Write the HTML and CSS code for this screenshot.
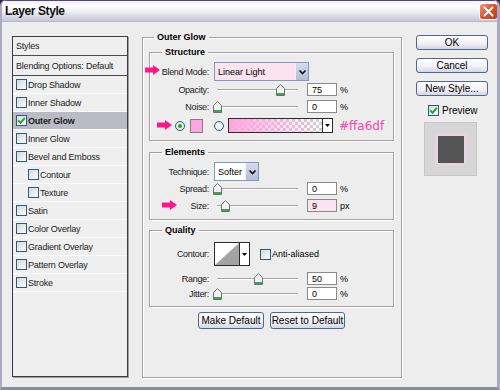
FILE: index.html
```html
<!DOCTYPE html>
<html lang="en">
<head>
<meta charset="UTF-8">
<meta name="viewport" content="width=device-width, initial-scale=1.0">
<title>Layer Style</title>
<link rel="stylesheet" href="styles.css">
</head>
<body>

<div class="window">
  <div class="titlebar">
    <span class="title">Layer Style</span>
    <span class="close">
      <svg width="11" height="11" viewBox="0 0 11 11"><path d="M1.5 1.5 L9.5 9.5 M9.5 1.5 L1.5 9.5" stroke="#fff" stroke-width="2" stroke-linecap="round"/></svg>
    </span>
  </div>

  <div class="content">
    <ul class="styles-list">
      <li class="head">Styles</li>
      <li class="head">Blending Options: Default</li>
      <li><span class="check"></span>Drop Shadow</li>
      <li><span class="check"></span>Inner Shadow</li>
      <li class="selected"><span class="check"><svg width="9" height="9" viewBox="0 0 9 9"><path d="M1.2 4.4 L3.5 6.8 L7.8 1.8" stroke="#1fa31f" stroke-width="1.9" fill="none"/></svg></span>Outer Glow</li>
      <li><span class="check"></span>Inner Glow</li>
      <li><span class="check"></span>Bevel and Emboss</li>
      <li class="sub"><span class="check"></span>Contour</li>
      <li class="sub"><span class="check"></span>Texture</li>
      <li><span class="check"></span>Satin</li>
      <li><span class="check"></span>Color Overlay</li>
      <li><span class="check"></span>Gradient Overlay</li>
      <li><span class="check"></span>Pattern Overlay</li>
      <li><span class="check"></span>Stroke</li>
    </ul>

    <fieldset class="group outer">
      <legend>Outer Glow</legend>

      <fieldset class="group structure">
        <legend>Structure</legend>
        <div class="row row-select">
          <span class="arrow arrow-blend"><svg width="15" height="10" viewBox="0 0 15 10"><polygon points="0,2.5 8,2.5 8,0 15,5 8,10 8,7.5 0,7.5" fill="#ff1689"/></svg></span>
          <label class="lbl">Blend Mode:</label>
          <div class="select blend">
            <span class="select-text">Linear Light</span>
            <span class="select-btn"><svg width="9" height="8" viewBox="0 0 9 8"><path d="M1.5 2.5 L4.5 5.5 L7.5 2.5" stroke="#111" stroke-width="1.6" fill="none"/></svg></span>
          </div>
        </div>
        <div class="row row-opacity">
          <label class="lbl">Opacity:</label>
          <div class="slider"><span class="thumb" style="left: 78%"></span></div>
          <span class="field">75</span><span class="unit">%</span>
        </div>
        <div class="row row-noise">
          <label class="lbl">Noise:</label>
          <div class="slider"><span class="thumb" style="left: 0%"></span></div>
          <span class="field">0</span><span class="unit">%</span>
        </div>
        <div class="row row-color">
          <span class="arrow arrow-color"><svg width="15" height="10" viewBox="0 0 15 10"><polygon points="0,2.5 8,2.5 8,0 15,5 8,10 8,7.5 0,7.5" fill="#ff1689"/></svg></span>
          <span class="radio on"></span>
          <span class="swatch"></span>
          <span class="radio"></span>
          <div class="grad">
            <span class="grad-fill"></span>
            <span class="grad-btn"><svg width="7" height="5" viewBox="0 0 7 5"><polygon points="1,1 6,1 3.5,4" fill="#000"/></svg></span>
          </div>
          <span class="hex">#ffa6df</span>
        </div>
      </fieldset>

      <fieldset class="group elements">
        <legend>Elements</legend>
        <div class="row row-select">
          <label class="lbl">Technique:</label>
          <div class="select technique">
            <span class="select-text">Softer</span>
            <span class="select-btn"><svg width="9" height="8" viewBox="0 0 9 8"><path d="M1.5 2.5 L4.5 5.5 L7.5 2.5" stroke="#111" stroke-width="1.6" fill="none"/></svg></span>
          </div>
        </div>
        <div class="row row-spread">
          <label class="lbl">Spread:</label>
          <div class="slider"><span class="thumb" style="left: 0%"></span></div>
          <span class="field">0</span><span class="unit">%</span>
        </div>
        <div class="row row-size">
          <span class="arrow arrow-size"><svg width="15" height="10" viewBox="0 0 15 10"><polygon points="0,2.5 8,2.5 8,0 15,5 8,10 8,7.5 0,7.5" fill="#ff1689"/></svg></span>
          <label class="lbl">Size:</label>
          <div class="slider"><span class="thumb" style="left: 10%"></span></div>
          <span class="field pink">9</span><span class="unit">px</span>
        </div>
      </fieldset>

      <fieldset class="group quality">
        <legend>Quality</legend>
        <div class="row row-contour">
          <label class="lbl">Contour:</label>
          <div class="contour">
            <span class="contour-img"><svg width="24" height="22" viewBox="0 0 24 22"><polygon points="0,22 24,0 24,22" fill="#a3a3a3"/></svg></span>
            <span class="grad-btn"><svg width="7" height="5" viewBox="0 0 7 5"><polygon points="1,1 6,1 3.5,4" fill="#000"/></svg></span>
          </div>
          <span class="check aa"></span><span class="aa-label">Anti-aliased</span>
        </div>
        <div class="row row-range">
          <label class="lbl">Range:</label>
          <div class="slider"><span class="thumb" style="left: 50%"></span></div>
          <span class="field">50</span><span class="unit">%</span>
        </div>
        <div class="row row-jitter">
          <label class="lbl">Jitter:</label>
          <div class="slider"><span class="thumb" style="left: 0%"></span></div>
          <span class="field">0</span><span class="unit">%</span>
        </div>
      </fieldset>

      <div class="defaults">
        <button class="btn make">Make Default</button>
        <button class="btn reset">Reset to Default</button>
      </div>
    </fieldset>

    <div class="side">
      <button class="btn side-btn">OK</button>
      <button class="btn side-btn">Cancel</button>
      <button class="btn side-btn">New Style...</button>
      <div class="preview-row">
        <span class="check"><svg width="9" height="9" viewBox="0 0 9 9"><path d="M1.2 4.4 L3.5 6.8 L7.8 1.8" stroke="#1fa31f" stroke-width="1.9" fill="none"/></svg></span>
        <span>Preview</span>
      </div>
      <div class="preview">
        <span class="preview-square"></span>
      </div>
    </div>
  </div>
</div>

</body>
</html>
```

FILE: styles.css
```css
body {
  margin: 0;
  background-color: #2f2147;
  font-family: "Liberation Sans", Arial, sans-serif;
  font-size: 9px;
  color: #000;
}

.window {
  width: 500px;
  height: 390px;
  box-sizing: border-box;
  background-color: #ededed;
  border-left: 2px solid #a9a9c2;
  border-right: 3px solid #a9a9c2;
  border-bottom: 3px solid #8a8aa2;
  border-radius: 6px 6px 0 0;
  overflow: hidden;
}

/* title bar */
.titlebar {
  height: 22px;
  box-sizing: border-box;
  display: flex;
  align-items: center;
  justify-content: space-between;
  padding-left: 3px;
  border-top: 1px solid #54467a;
  border-bottom: 1px solid #b8b8cc;
  background: linear-gradient(#eeeef4, #ffffff 25%, #ececf2 55%, #c6c6d8);
}

.title {
  font-size: 12px;
  font-weight: bold;
  letter-spacing: -0.4px;
  color: #111;
}

.close {
  width: 19px;
  height: 17px;
  box-sizing: border-box;
  margin-right: -1px;
  display: flex;
  align-items: center;
  justify-content: center;
  border: 1px solid #fff;
  border-radius: 3px;
  background: linear-gradient(135deg, #f09a80, #d9542e 50%, #c23c16);
}

.content {
  display: flex;
  align-items: flex-start;
  padding: 9px 0 0 10px;
}

/* left styles list */
.styles-list {
  width: 116px;
  height: 341px;
  box-sizing: border-box;
  margin: 5px 0 0;
  padding: 0;
  list-style: none;
  border: 1px solid #3d3d3d;
  box-shadow: 1px 1px 0 #a0a0a0;
  background-color: #efefef;
  letter-spacing: -0.2px;
  color: #1a1a1a;
}

.styles-list li {
  height: 18px;
  box-sizing: border-box;
  display: flex;
  align-items: center;
  padding-left: 3px;
  border-bottom: 1px solid #fbfbfb;
}

.styles-list li.head {
  height: 19px;
  border-bottom: 1px solid #4a4a4a;
}

.styles-list li.head + li.head {
  height: 20px;
}

.styles-list li.sub {
  padding-left: 15px;
}

.styles-list li.selected {
  background-color: #bbbbc5;
  font-weight: bold;
}

.check {
  width: 11px;
  height: 11px;
  box-sizing: border-box;
  flex: none;
  display: inline-flex;
  align-items: center;
  justify-content: center;
  margin-right: 1px;
  border: 1px solid #2a5a8a;
  background: linear-gradient(135deg, #d8d8d2, #fbfbfb);
}

/* group boxes */
.group {
  margin: 0;
  box-sizing: border-box;
  border: 1px solid #a2a2a2;
  box-shadow: inset 1px 1px 0 #fff, 1px 1px 0 #fff;
}

.group legend {
  font-weight: bold;
  line-height: 12px;
  padding: 0 3px;
}

.outer {
  width: 260px;
  height: 347px;
  margin-left: 14px;
  padding: 0 7px 0 6px;
}

.outer > legend {
  margin-left: 5px;
}

.structure,
.elements,
.quality {
  width: 245px;
  padding: 0 0 7px;
}

.structure > legend,
.elements > legend,
.quality > legend {
  margin-left: 12px;
}

.structure {
  margin-top: 3px;
}

.elements {
  margin-top: 5px;
}

.quality {
  margin-top: 4px;
  padding-bottom: 6px;
}

/* rows */
.row {
  position: relative;
  display: flex;
  align-items: center;
  height: 13px;
}

.lbl {
  width: 59px;
  margin-right: 5px;
  text-align: right;
  letter-spacing: -0.3px;
  color: #1a1a1a;
  flex: none;
}

.structure .row-select {
  margin-top: 4px;
  height: 19px;
}

.row-opacity {
  margin-top: 2px;
}

.row-noise {
  margin-top: 4px;
}

.row-color {
  margin-top: 5px;
  height: 15px;
}

.elements .row-select {
  margin-top: 4px;
  height: 19px;
}

.row-spread {
  margin-top: 1px;
}

.row-size {
  margin-top: 4px;
}

.row-contour {
  margin-top: 6px;
  height: 24px;
}

.row-range {
  margin-top: 6px;
}

.row-jitter {
  margin-top: 2px;
}

.arrow {
  position: absolute;
  display: flex;
}

.arrow-blend {
  left: -5px;
  top: 3px;
}

.arrow-color {
  left: 7px;
  top: 2px;
}

.arrow-size {
  left: 12px;
  top: 1px;
}

/* selects */
.select {
  height: 19px;
  box-sizing: border-box;
  display: flex;
  border: 1px solid #7f9db9;
  background-color: #fff;
}

.blend {
  width: 95px;
  background-color: #fde3ef;
}

.technique {
  width: 45px;
}

.select-text {
  flex: 1;
  display: flex;
  align-items: center;
  padding-left: 3px;
}

.select-btn {
  width: 12px;
  display: flex;
  align-items: center;
  justify-content: center;
  border-left: 1px solid #eef0f8;
  background: linear-gradient(#d6dcee, #b3bcd8);
}

/* sliders */
.slider {
  position: relative;
  width: 81px;
  height: 1px;
  margin: 0 9px 0 3px;
  border-top: 1px solid #a4a4a4;
  background-color: #fff;
  flex: none;
}

.thumb {
  position: absolute;
  top: -6px;
  width: 9px;
  height: 12px;
  margin-left: -4px;
  background: url("data:image/svg+xml,%3Csvg xmlns='http://www.w3.org/2000/svg' width='9' height='12' viewBox='0 0 9 12'%3E%3Cpolygon points='0.5,4.5 4.5,0.5 8.5,4.5 8.5,11.5 0.5,11.5' fill='%23f2f2f2' stroke='%23707070'/%3E%3Crect x='1' y='9' width='7' height='2' fill='%2333a852'/%3E%3C/svg%3E") no-repeat;
}

.field {
  width: 30px;
  height: 13px;
  box-sizing: border-box;
  display: flex;
  align-items: center;
  padding-left: 4px;
  border: 1px solid #8a8a8a;
  background-color: #fff;
  flex: none;
}

.field.pink {
  background-color: #fde3ef;
}

.unit {
  margin-left: 3px;
}

/* color row */
.radio {
  width: 10px;
  height: 10px;
  box-sizing: border-box;
  border-radius: 50%;
  border: 1px solid #2a5a8a;
  background: radial-gradient(#fff, #dcdcd6);
  display: flex;
  align-items: center;
  justify-content: center;
  flex: none;
}

.row-color .radio.on {
  margin-left: 25px;
}

.radio.on::after {
  content: "";
  width: 4px;
  height: 4px;
  border-radius: 50%;
  background-color: #22a022;
}

.swatch {
  width: 13px;
  height: 14px;
  box-sizing: border-box;
  margin: 0 11px 0 5px;
  border: 1px solid #808080;
  background-color: #ffa6df;
}

.grad {
  display: flex;
  height: 15px;
  box-sizing: border-box;
  margin-left: 4px;
  border: 1px solid #2b2b2b;
}

.grad-fill {
  width: 93px;
  background:
    linear-gradient(to right, #ffa6df, rgba(255, 166, 223, 0)),
    conic-gradient(#cfcfcf 25%, #fff 0 50%, #cfcfcf 0 75%, #fff 0) 0 0 / 6px 6px;
}

.grad-btn {
  width: 9px;
  display: flex;
  align-items: center;
  justify-content: center;
  border-left: 1px solid #2b2b2b;
  background-color: #fff;
}

.hex {
  margin-left: 6px;
  font-family: "DejaVu Sans", sans-serif;
  font-size: 12px;
  color: #ff42a8;
}

/* contour */
.contour {
  display: flex;
  height: 24px;
  box-sizing: border-box;
  border: 1px solid #2b2b2b;
}

.contour-img {
  width: 24px;
  display: flex;
  background-color: #fff;
}

.contour .grad-btn {
  width: 9px;
}

.check.aa {
  margin-left: 10px;
}

/* buttons */
.btn {
  box-sizing: border-box;
  padding: 0;
  font-family: "Liberation Sans", Arial, sans-serif;
  font-size: 10px;
  color: #000;
  border: 1px solid #4a6896;
  border-radius: 3px;
  background: linear-gradient(#ffffff, #f2f2f7 55%, #d6d6e2);
}

.defaults {
  display: flex;
  justify-content: center;
  gap: 6px;
  margin-top: 5px;
}

.make {
  width: 66px;
  height: 17px;
}

.reset {
  width: 75px;
  height: 17px;
}

.side {
  width: 72px;
  margin-left: 14px;
  display: flex;
  flex-direction: column;
}

.side-btn {
  height: 15px;
  margin-bottom: 8px;
}

.side-btn:first-child {
  margin-top: 4px;
}

.preview-row {
  display: flex;
  align-items: center;
  gap: 2px;
  height: 11px;
  margin: 1px 0 0 12px;
  font-size: 10px;
}

.preview {
  width: 53px;
  height: 54px;
  box-sizing: border-box;
  margin: 6px 0 0 8px;
  display: flex;
  align-items: center;
  justify-content: center;
  border: 1px solid #c6c6c6;
  background-color: #d6d6d6;
}

.preview-square {
  width: 26px;
  height: 27px;
  background-color: #545454;
  box-shadow: 0 0 4px 1px #fbd6ee;
}
```
